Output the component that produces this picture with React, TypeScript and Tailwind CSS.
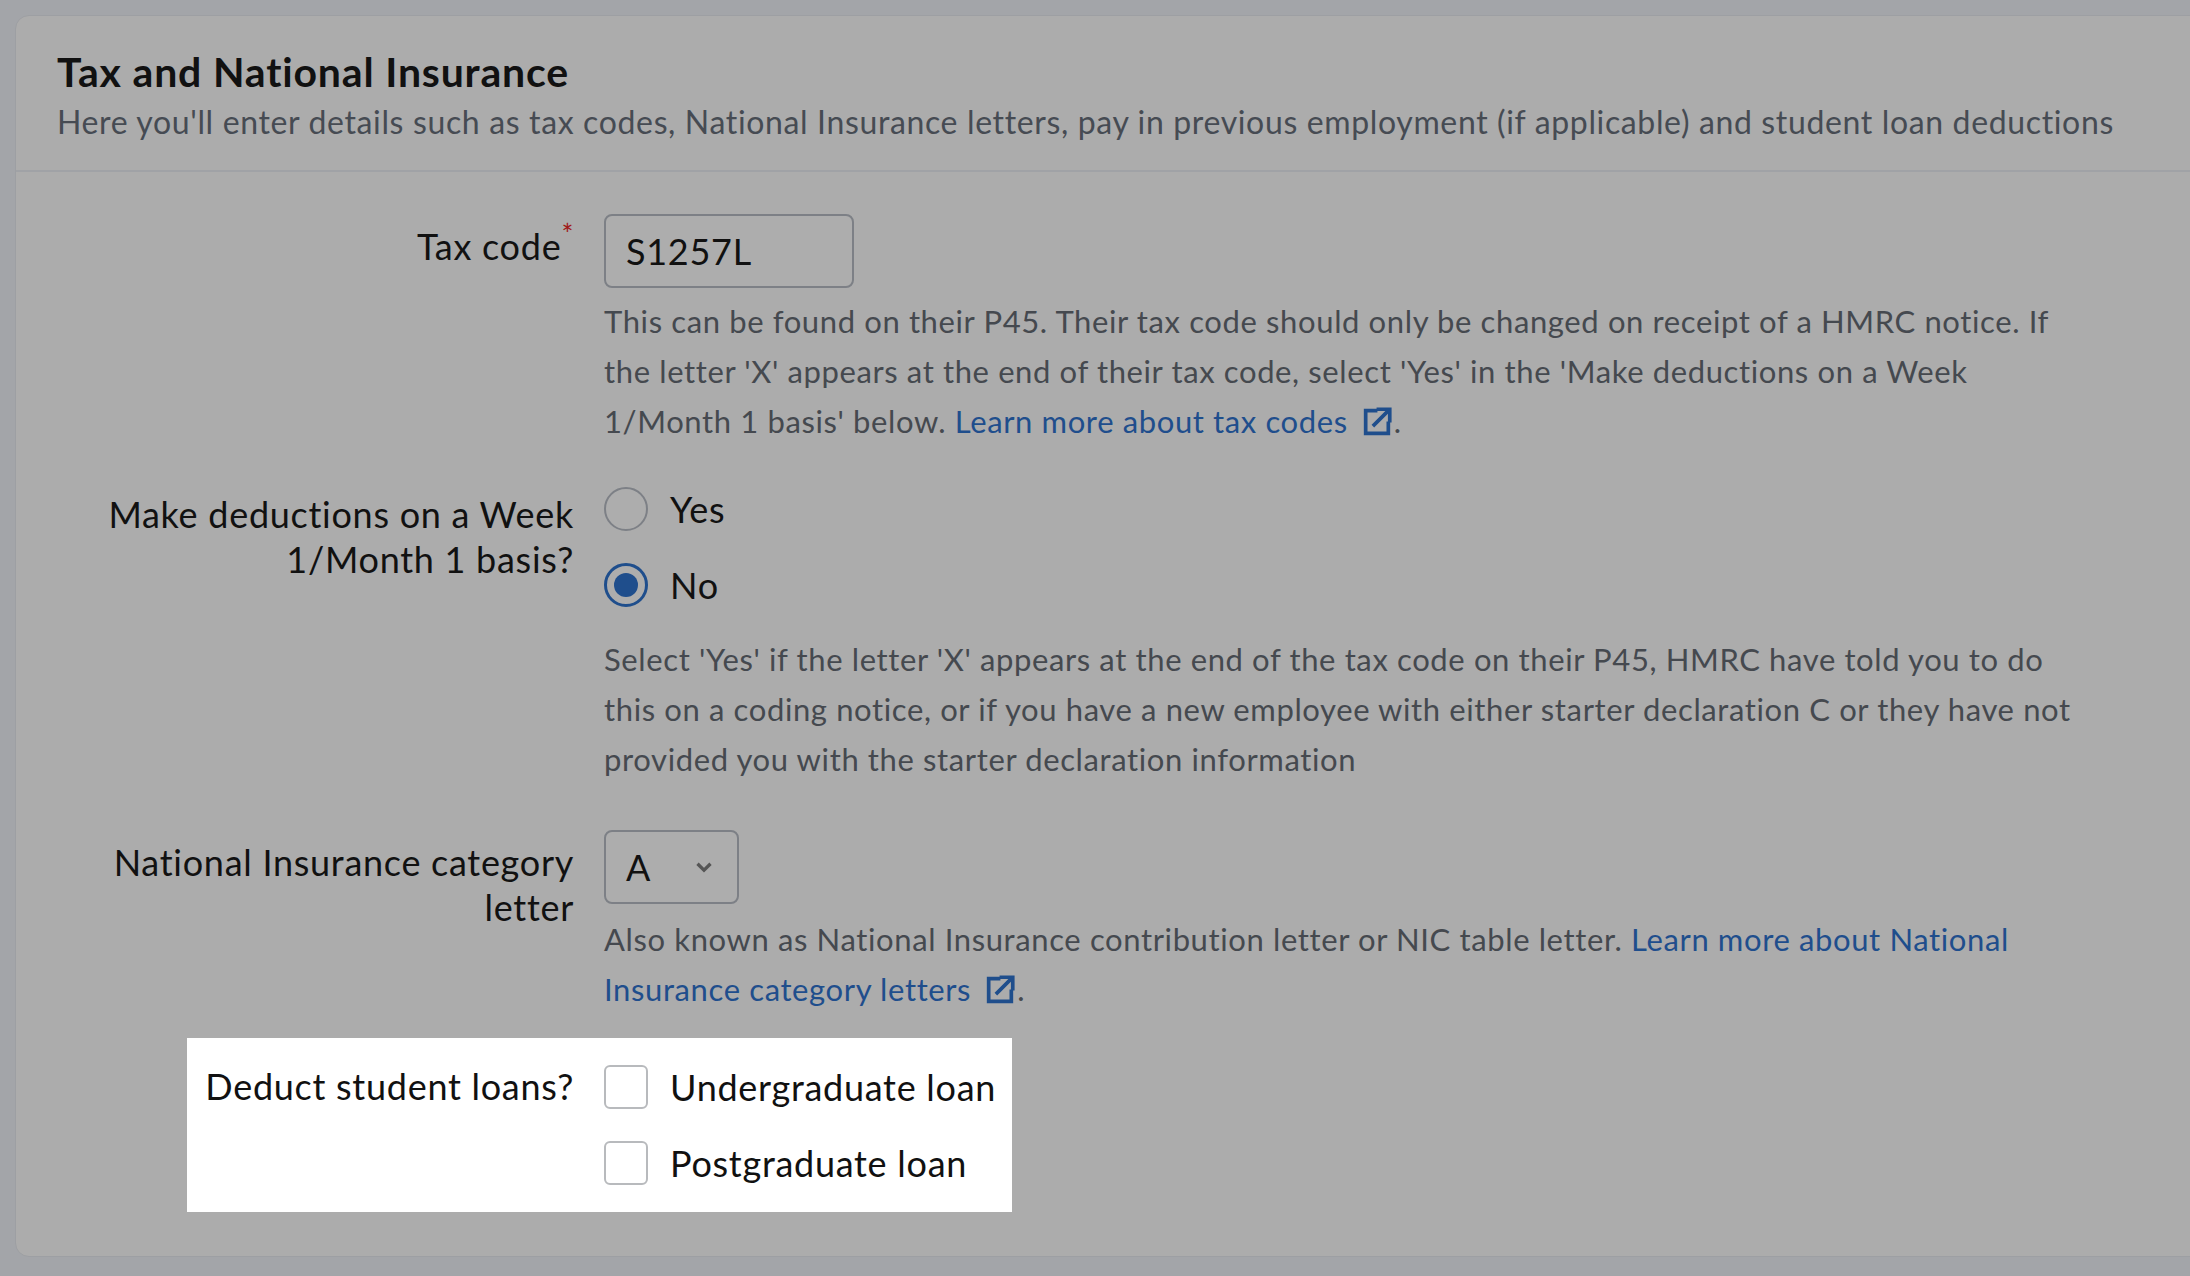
function ExtIcon() {
  return (
    <svg viewBox="0 0 24 24" className="inline-block w-[34px] h-[34px] ml-3 align-[-6px]" fill="none" stroke="#1f4e8c" strokeWidth="2.6" strokeLinecap="square">
      <path d="M11 4H4v16h16v-7" />
      <path d="M10 14L20 4" />
      <path d="M13 3h8v8" />
    </svg>
  );
}

function Row({ label, children, required, className = "" }: { label: React.ReactNode; children: React.ReactNode; required?: boolean; className?: string }) {
  return (
    <div className={`grid grid-cols-[558px_1fr] gap-x-[30px] ${className}`}>
      <div className="text-right text-[36px] tracking-[0.02em] leading-[45px] text-[#111] pt-[10px] pl-8">
        {label}
        {required && <span className="text-[#a01818] text-[28px] align-top relative -top-3">*</span>}
      </div>
      <div>{children}</div>
    </div>
  );
}

const help = "text-[31px] tracking-[0.02em] leading-[50px] text-[#45494f] whitespace-nowrap";
const link = "text-[#1f4e8c]";

export default function App() {
  return (
    <div className="min-h-[1276px] bg-[#a3a5a9] pt-[15px] pl-[15px] overflow-hidden" style={{ fontFamily: "Lato, 'Noto Sans', sans-serif" }}>
      <div className="w-[2300px] h-[1242px] bg-[#acacac] rounded-tl-[14px] rounded-bl-[14px] border border-[#9d9fa3]">
        <div className="pl-[41px] pt-[30px] pb-[26px] border-b-2 border-[#a0a2a6]">
          <h1 className="text-[41px] tracking-[0.02em] font-bold text-[#111] leading-[52px]">Tax and National Insurance</h1>
          <p className="text-[32px] tracking-[0.02em] text-[#464b53] leading-[44px] mt-[2px] whitespace-nowrap">
            Here you'll enter details such as tax codes, National Insurance letters, pay in previous employment (if applicable) and student loan deductions
          </p>
        </div>

        <div className="pt-[42px] flex flex-col">
          <Row label="Tax code" required>
            <div className="w-[250px] h-[74px] border-2 border-[#7d8086] rounded-[8px] bg-[#adadad] flex items-center px-[20px] text-[36px] tracking-[0.02em] text-[#111]">S1257L</div>
            <p className={`${help} mt-[8px]`}>
              This can be found on their P45. Their tax code should only be changed on receipt of a HMRC notice. If<br />
              the letter 'X' appears at the end of their tax code, select 'Yes' in the 'Make deductions on a Week<br />
              1/Month 1 basis' below. <span className={link}>Learn more about tax codes</span><ExtIcon />.
            </p>
          </Row>

          <Row className="mt-[36px]" label={<>Make deductions on a Week<br />1/Month 1 basis?</>}>
            <div className="flex flex-col gap-[22px]">
              <label className="flex items-center gap-[22px] text-[36px] tracking-[0.02em] text-[#111]">
                <span className="w-[44px] h-[44px] rounded-full border-2 border-[#7d8086] bg-[#adadad]" />Yes
              </label>
              <label className="flex items-center gap-[22px] text-[36px] tracking-[0.02em] text-[#111]">
                <span className="w-[44px] h-[44px] rounded-full border-[3px] border-[#1f4e8c] bg-[#adadad] flex items-center justify-center">
                  <span className="w-[24px] h-[24px] rounded-full bg-[#1f4e8c]" />
                </span>No
              </label>
            </div>
            <p className={`${help} mt-[22px]`}>
              Select 'Yes' if the letter 'X' appears at the end of the tax code on their P45, HMRC have told you to do<br />
              this on a coding notice, or if you have a new employee with either starter declaration C or they have not<br />
              provided you with the starter declaration information
            </p>
          </Row>

          <Row className="mt-[46px]" label={<>National Insurance category<br />letter</>}>
            <div className="w-[135px] h-[74px] border-2 border-[#7d8086] rounded-[8px] bg-[#adadad] flex items-center justify-between px-[20px] text-[36px] text-[#111]">
              A
              <svg viewBox="0 0 24 24" className="w-[26px] h-[26px]" fill="none" stroke="#555" strokeWidth="3"><path d="M6 9l6 6 6-6" /></svg>
            </div>
            <p className={`${help} mt-[10px]`}>
              Also known as National Insurance contribution letter or NIC table letter. <span className={link}>Learn more about National</span><br />
              <span className={link}>Insurance category letters</span><ExtIcon />.
            </p>
          </Row>

          <div className="mt-[24px] ml-[171px] w-[825px] bg-white py-[22px] grid grid-cols-[387px_1fr] gap-x-[30px]">
            <div className="text-right text-[36px] tracking-[0.02em] leading-[45px] text-[#111] pt-[4px] whitespace-nowrap">Deduct student loans?</div>
            <div className="flex flex-col gap-[22px]">
              {["Undergraduate loan", "Postgraduate loan"].map((t) => (
                <label key={t} className="flex items-center gap-[22px] text-[36px] tracking-[0.02em] text-[#111] whitespace-nowrap">
                  <span className="w-[44px] h-[44px] rounded-[6px] border-2 border-[#b8babd] bg-white" />{t}
                </label>
              ))}
            </div>
          </div>
        </div>
      </div>
    </div>
  );
}
